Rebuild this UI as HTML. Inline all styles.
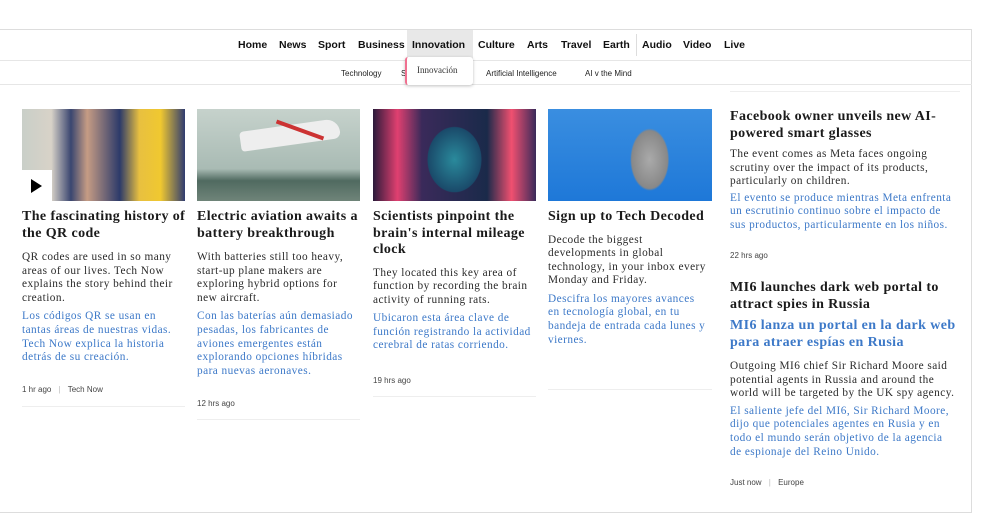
<!DOCTYPE html>
<html><head><meta charset="utf-8"><style>
*{margin:0;padding:0;box-sizing:border-box}
body{width:1000px;height:531px;background:#fff;position:relative;overflow:hidden;font-family:"Liberation Serif",serif;color:#222}
.a{position:absolute}
.nav{font-family:"Liberation Sans",sans-serif;font-weight:bold;font-size:10.5px;color:#111;top:39px}
.sub{font-family:"Liberation Sans",sans-serif;font-size:8px;color:#222}
.h{font-weight:bold;font-size:14px;letter-spacing:0.4px;line-height:16.5px;color:#1a1a1a;white-space:nowrap}
.b{font-size:11.3px;letter-spacing:0.45px;line-height:13.6px;color:#2a2a2a;white-space:nowrap}
.bl{font-size:11.3px;letter-spacing:0.45px;line-height:13.6px;color:#3d79c8;white-space:nowrap}
.m{font-family:"Liberation Sans",sans-serif;font-size:8px;color:#444}
.r{height:1px;background:#eee}
</style></head><body>
<div class="a" style="left:0;top:29px;width:972px;height:1px;background:#ddd"></div>
<div class="a" style="left:971px;top:29px;width:1px;height:484px;background:#ddd"></div>
<div class="a" style="left:0;top:512px;width:972px;height:1px;background:#ddd"></div>
<div class="a" style="left:0;top:60px;width:972px;height:1px;background:#e6e6e6"></div>
<div class="a" style="left:0;top:84px;width:972px;height:1px;background:#e6e6e6"></div>
<div class="a" style="left:407px;top:30px;width:66px;height:30px;background:#e8e8e8"></div>
<div class="a" style="left:636px;top:34px;width:1px;height:22px;background:#ddd"></div>
<div class="a nav" style="left:238px">Home</div>
<div class="a nav" style="left:279px">News</div>
<div class="a nav" style="left:318px">Sport</div>
<div class="a nav" style="left:358px">Business</div>
<div class="a nav" style="left:412px">Innovation</div>
<div class="a nav" style="left:478px">Culture</div>
<div class="a nav" style="left:527px">Arts</div>
<div class="a nav" style="left:561px">Travel</div>
<div class="a nav" style="left:603px">Earth</div>
<div class="a nav" style="left:642px">Audio</div>
<div class="a nav" style="left:683px">Video</div>
<div class="a nav" style="left:724px">Live</div>
<div class="a sub" style="left:341px;top:69px">Technology</div>
<div class="a sub" style="left:401px;top:69px">S</div>
<div class="a sub" style="left:486px;top:69px">Artificial Intelligence</div>
<div class="a sub" style="left:585px;top:69px">AI v the Mind</div>
<div class="a" style="left:405px;top:57px;width:68px;height:28px;background:#fff;border-left:2px solid #f07090;border-radius:3px;box-shadow:0 1px 3px rgba(0,0,0,.25)"></div>
<div class="a" style="left:417px;top:65px;font-size:9px;color:#333">Innovación</div>

<div class="a r" style="left:730px;top:91px;width:230px"></div>

<!-- images -->
<div class="a" style="left:22px;top:109px;width:163px;height:92px;background:linear-gradient(90deg,#c9cfc8 0,#d8d2c8 18%,#3a4670 30%,#c69c84 40%,#2c3a6a 60%,#e8c040 72%,#f0c830 85%,#303c70 100%)"></div>
<div class="a" style="left:22px;top:170px;width:30px;height:31px;background:#fff"></div>
<div class="a" style="left:31px;top:179px;width:0;height:0;border-left:11px solid #000;border-top:7px solid transparent;border-bottom:7px solid transparent"></div>
<div class="a" style="left:197px;top:109px;width:163px;height:92px;background:linear-gradient(#c6d2cc 0,#a9bbb4 65%,#506a60 78%,#6f8479 100%)"></div>
<div class="a" style="left:240px;top:125px;width:100px;height:20px;background:#eee;border-radius:12px 40px 20px 10px;transform:rotate(-8deg)"></div>
<div class="a" style="left:275px;top:128px;width:50px;height:4px;background:#c33;transform:rotate(20deg)"></div>
<div class="a" style="left:373px;top:109px;width:163px;height:92px;background:radial-gradient(ellipse 38px 46px at 50% 55%,#2a8a9c 0,#1a4a6a 70%,transparent 72%),linear-gradient(90deg,#2a1a3a,#e04070 15%,#3a2a5a 30%,#1a2a4a 70%,#f05070 85%,#3a2a5a)"></div>
<div class="a" style="left:548px;top:109px;width:164px;height:92px;background:radial-gradient(ellipse 30px 48px at 62% 55%,#aaa 0,#888 60%,transparent 65%),linear-gradient(#3a8ee0,#1e78d8)"></div>

<!-- col1 -->
<div class="a" style="left:22px;top:209px">
<div class="h">The fascinating history of<br>the QR code</div>
<div class="b" style="margin-top:9px">QR codes are used in so many<br>areas of our lives. Tech Now<br>explains the story behind their<br>creation.</div>
<div class="bl" style="margin-top:5px">Los códigos QR se usan en<br>tantas áreas de nuestras vidas.<br>Tech Now explica la historia<br>detrás de su creación.</div>
</div>
<div class="a m" style="left:22px;top:385px">1 hr ago <span style="color:#bbb;margin:0 5px">|</span> Tech Now</div>
<div class="a r" style="left:22px;top:406px;width:163px"></div>
<!-- col2 -->
<div class="a" style="left:197px;top:209px">
<div class="h">Electric aviation awaits a<br>battery breakthrough</div>
<div class="b" style="margin-top:9px">With batteries still too heavy,<br>start-up plane makers are<br>exploring hybrid options for<br>new aircraft.</div>
<div class="bl" style="margin-top:5px">Con las baterías aún demasiado<br>pesadas, los fabricantes de<br>aviones emergentes están<br>explorando opciones híbridas<br>para nuevas aeronaves.</div>
</div>
<div class="a m" style="left:197px;top:399px">12 hrs ago</div>
<div class="a r" style="left:197px;top:419px;width:163px"></div>
<!-- col3 -->
<div class="a" style="left:373px;top:209px">
<div class="h">Scientists pinpoint the<br>brain's internal mileage<br>clock</div>
<div class="b" style="margin-top:8px">They located this key area of<br>function by recording the brain<br>activity of running rats.</div>
<div class="bl" style="margin-top:5px">Ubicaron esta área clave de<br>función registrando la actividad<br>cerebral de ratas corriendo.</div>
</div>
<div class="a m" style="left:373px;top:376px">19 hrs ago</div>
<div class="a r" style="left:373px;top:396px;width:163px"></div>
<!-- col4 -->
<div class="a" style="left:548px;top:209px">
<div class="h">Sign up to Tech Decoded</div>
<div class="b" style="margin-top:8px">Decode the biggest<br>developments in global<br>technology, in your inbox every<br>Monday and Friday.</div>
<div class="bl" style="margin-top:5px">Descifra los mayores avances<br>en tecnología global, en tu<br>bandeja de entrada cada lunes y<br>viernes.</div>
</div>
<div class="a r" style="left:548px;top:389px;width:164px"></div>
<!-- col5 -->
<div class="a" style="left:730px;top:109px">
<div class="h">Facebook owner unveils new AI-<br>powered smart glasses</div>
<div class="b" style="margin-top:6px">The event comes as Meta faces ongoing<br>scrutiny over the impact of its products,<br>particularly on children.</div>
<div class="bl" style="margin-top:3px">El evento se produce mientras Meta enfrenta<br>un escrutinio continuo sobre el impacto de<br>sus productos, particularmente en los niños.</div>
</div>
<div class="a m" style="left:730px;top:251px">22 hrs ago</div>
<div class="a" style="left:730px;top:280px">
<div class="h">MI6 launches dark web portal to<br>attract spies in Russia</div>
<div class="h" style="color:#3d79c8;margin-top:5px">MI6 lanza un portal en la dark web<br>para atraer espías en Rusia</div>
<div class="b" style="margin-top:9px">Outgoing MI6 chief Sir Richard Moore said<br>potential agents in Russia and around the<br>world will be targeted by the UK spy agency.</div>
<div class="bl" style="margin-top:4px">El saliente jefe del MI6, Sir Richard Moore,<br>dijo que potenciales agentes en Rusia y en<br>todo el mundo serán objetivo de la agencia<br>de espionaje del Reino Unido.</div>
</div>
<div class="a m" style="left:730px;top:478px">Just now <span style="color:#bbb;margin:0 5px">|</span> Europe</div>
</body></html>
